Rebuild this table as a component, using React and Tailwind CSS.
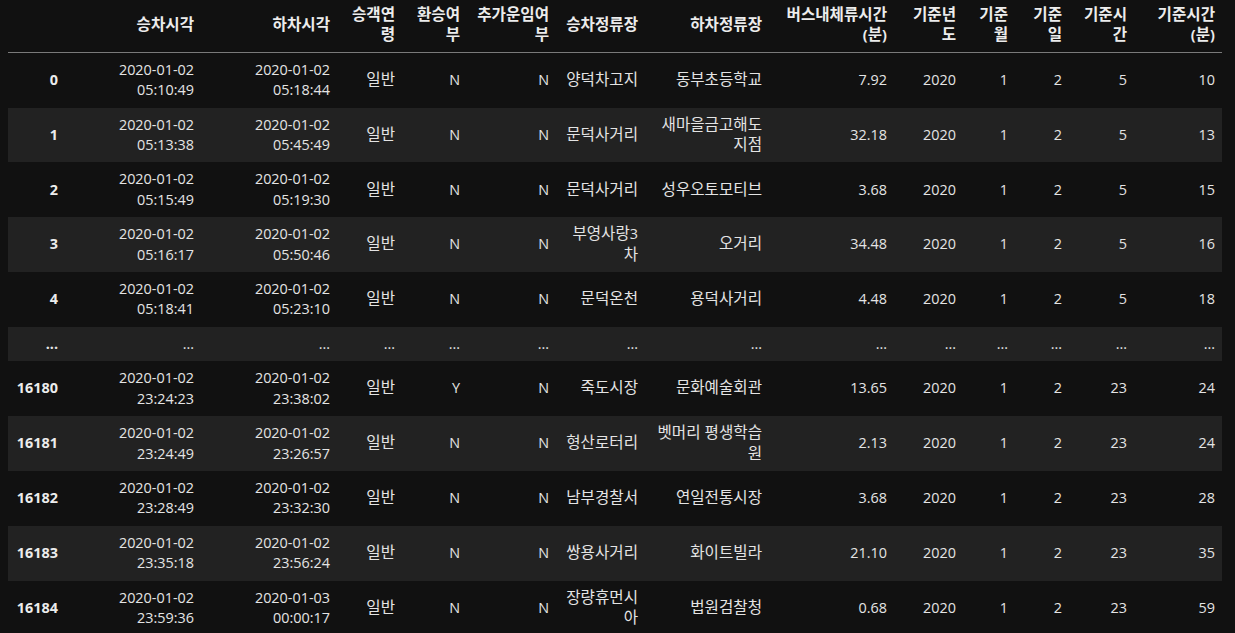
import React from 'react';

const cols = [
  { w: 'w-[57px]', label: [''] },
  { w: 'w-[136px]', label: ['승차시각'] },
  { w: 'w-[136px]', label: ['하차시각'] },
  { w: 'w-[65px]', label: ['승객연', '령'] },
  { w: 'w-[65px]', label: ['환승여', '부'] },
  { w: 'w-[89px]', label: ['추가운임여', '부'] },
  { w: 'w-[89px]', label: ['승차정류장'] },
  { w: 'w-[124px]', label: ['하차정류장'] },
  { w: 'w-[125px]', label: ['버스내체류시간', '(분)'] },
  { w: 'w-[69px]', label: ['기준년', '도'] },
  { w: 'w-[52px]', label: ['기준', '월'] },
  { w: 'w-[54px]', label: ['기준', '일'] },
  { w: 'w-[65px]', label: ['기준시', '간'] },
  { w: 'w-[88px]', label: ['기준시간', '(분)'] },
];

const rows = [
  ['0', ['2020-01-02', '05:10:49'], ['2020-01-02', '05:18:44'], '일반', 'N', 'N', ['양덕차고지'], ['동부초등학교'], '7.92', '2020', '1', '2', '5', '10'],
  ['1', ['2020-01-02', '05:13:38'], ['2020-01-02', '05:45:49'], '일반', 'N', 'N', ['문덕사거리'], ['새마을금고해도', '지점'], '32.18', '2020', '1', '2', '5', '13'],
  ['2', ['2020-01-02', '05:15:49'], ['2020-01-02', '05:19:30'], '일반', 'N', 'N', ['문덕사거리'], ['성우오토모티브'], '3.68', '2020', '1', '2', '5', '15'],
  ['3', ['2020-01-02', '05:16:17'], ['2020-01-02', '05:50:46'], '일반', 'N', 'N', ['부영사랑3', '차'], ['오거리'], '34.48', '2020', '1', '2', '5', '16'],
  ['4', ['2020-01-02', '05:18:41'], ['2020-01-02', '05:23:10'], '일반', 'N', 'N', ['문덕온천'], ['용덕사거리'], '4.48', '2020', '1', '2', '5', '18'],
  null,
  ['16180', ['2020-01-02', '23:24:23'], ['2020-01-02', '23:38:02'], '일반', 'Y', 'N', ['죽도시장'], ['문화예술회관'], '13.65', '2020', '1', '2', '23', '24'],
  ['16181', ['2020-01-02', '23:24:49'], ['2020-01-02', '23:26:57'], '일반', 'N', 'N', ['형산로터리'], ['벳머리 평생학습', '원'], '2.13', '2020', '1', '2', '23', '24'],
  ['16182', ['2020-01-02', '23:28:49'], ['2020-01-02', '23:32:30'], '일반', 'N', 'N', ['남부경찰서'], ['연일전통시장'], '3.68', '2020', '1', '2', '23', '28'],
  ['16183', ['2020-01-02', '23:35:18'], ['2020-01-02', '23:56:24'], '일반', 'N', 'N', ['쌍용사거리'], ['화이트빌라'], '21.10', '2020', '1', '2', '23', '35'],
  ['16184', ['2020-01-02', '23:59:36'], ['2020-01-03', '00:00:17'], '일반', 'N', 'N', ['장량휴먼시', '아'], ['법원검찰청'], '0.68', '2020', '1', '2', '23', '59'],
];

// hangul runs get a slightly bigger size, like the Malgun glyphs in the notebook
const Text = ({ t }) =>
  t.split(/([가-힣 ]+)/).filter(Boolean).map((part, i) =>
    /[가-힣]/.test(part) ? (
      <span key={i} className="text-[15.6px] leading-none">{part}</span>
    ) : (
      <React.Fragment key={i}>{part}</React.Fragment>
    )
  );

const Lines = ({ v }) => {
  const list = Array.isArray(v) ? v : [v];
  return list.map((t, i) => (
    <React.Fragment key={i}>
      {i > 0 && <br />}
      <Text t={t} />
    </React.Fragment>
  ));
};

export default function App() {
  return (
    <div
      className="min-h-screen bg-[#111111] pl-[8px] text-[14.4px] leading-[20.4px] text-[#e4e4e4]"
      style={{ fontFamily: '"Open Sans", "Noto Sans CJK KR", sans-serif' }}
    >
      <table className="table-fixed border-collapse w-[1214px]">
        <thead>
          <tr className="border-b border-[#7a7a7a]">
            {cols.map((c, i) => (
              <th key={i} className={`${c.w} px-[7px] pt-[5px] pb-[6px] text-right align-middle font-bold text-[#ececec]`}>
                <Lines v={c.label} />
              </th>
            ))}
          </tr>
        </thead>
        <tbody>
          {rows.map((r, ri) => (
            <tr key={ri} className={ri % 2 === 1 ? 'bg-[#222222]' : 'bg-[#111111]'}>
              {r === null
                ? cols.map((_, i) => (
                    <td key={i} className={`px-[7px] py-[7px] text-right align-middle ${i === 0 ? 'font-bold' : ''}`}>
                      ...
                    </td>
                  ))
                : r.map((v, i) => (
                    <td
                      key={i}
                      className={`px-[7px] py-[7px] text-right align-middle ${i === 0 ? 'font-bold text-[#ececec]' : ''}`}
                    >
                      <Lines v={v} />
                    </td>
                  ))}
            </tr>
          ))}
        </tbody>
      </table>
    </div>
  );
}
